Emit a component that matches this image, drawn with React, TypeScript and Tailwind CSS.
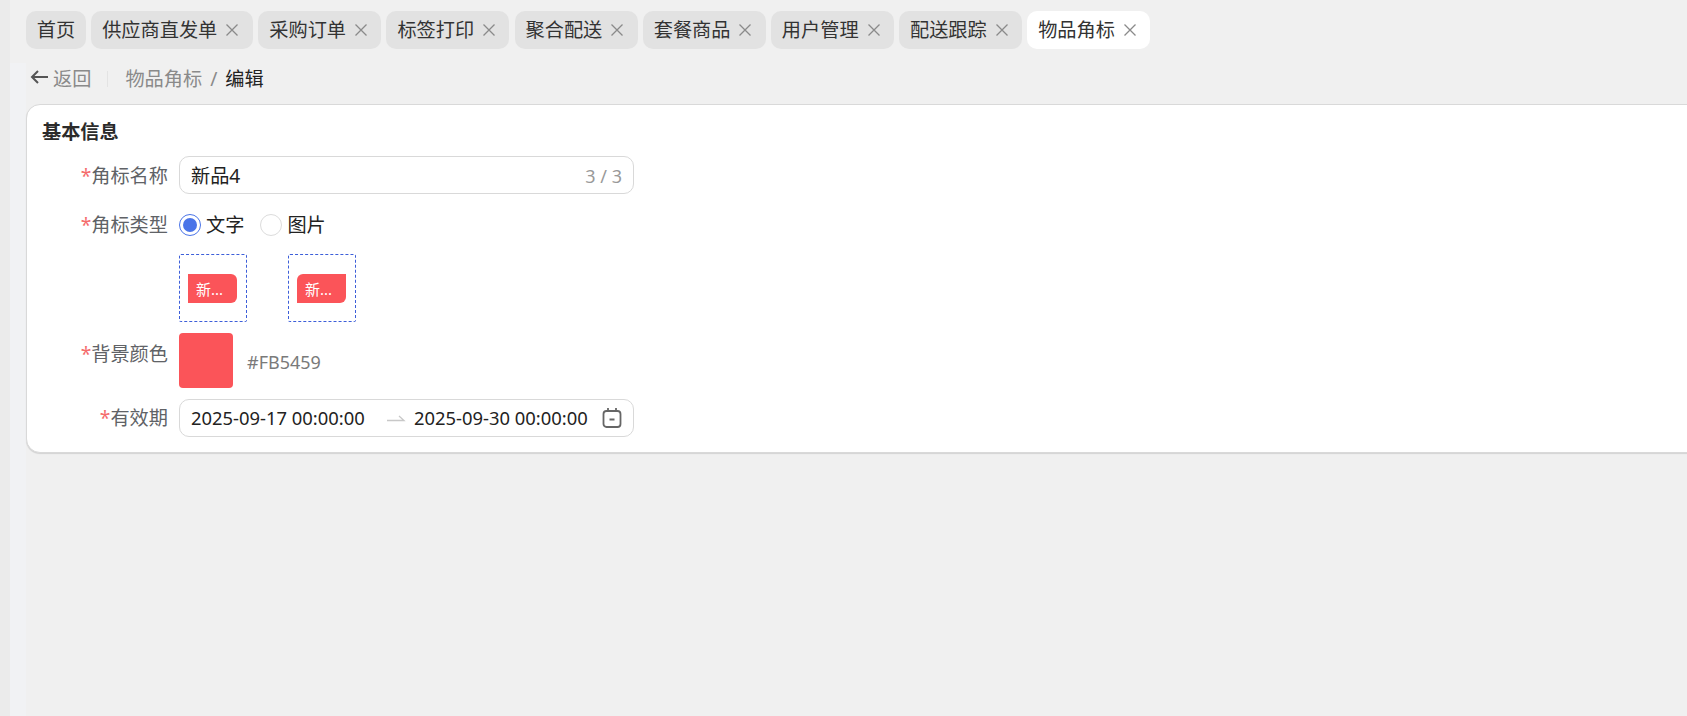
const FONT = "font-['Noto_Sans','Noto_Sans_CJK_SC',sans-serif]";

const TABS = [
  { label: '供应商直发单', width: 'w-[162px]' },
  { label: '采购订单', width: 'w-[123px]' },
  { label: '标签打印', width: 'w-[123px]' },
  { label: '聚合配送', width: 'w-[123px]' },
  { label: '套餐商品', width: 'w-[123px]' },
  { label: '用户管理', width: 'w-[123px]' },
  { label: '配送跟踪', width: 'w-[123px]' },
];

function CloseIcon() {
  return (
    <svg width="12" height="12" viewBox="0 0 12 12" className="shrink-0 text-[#8a8a8a]">
      <path d="M.5.5 11.5 11.5M11.5.5.5 11.5" stroke="currentColor" strokeWidth="1.3" fill="none" />
    </svg>
  );
}

function Tab({ label, width, active }: { label: string; width: string; active?: boolean }) {
  return (
    <div
      className={`${width} h-[38px] shrink-0 rounded-[10px] flex items-center pl-[11px] gap-[9px] text-[19.2px] text-[#333] ${
        active ? 'bg-white' : 'bg-[#e2e2e2]'
      }`}
    >
      <span className="whitespace-nowrap pt-[1px]">{label}</span>
      <CloseIcon />
    </div>
  );
}

function Label({ text, className = '' }: { text: string; className?: string }) {
  return (
    <div className={`w-[141px] shrink-0 text-right text-[19.2px] text-[#606266] leading-[26px] ${className}`}>
      <span className="text-[#f56c6c]">*</span>
      {text}
    </div>
  );
}

function Badge({ corners }: { corners: string }) {
  return (
    <div className="w-[68px] h-[68px] border border-dashed border-[#3d5fd9] rounded-[2px] flex items-center pl-[8px]">
      <div className={`w-[49px] h-[29px] mt-[2px] bg-[#fb5459] text-white text-[15px] flex items-center pl-[8px] pt-[1px] ${corners}`}>
        新...
      </div>
    </div>
  );
}

export default function App() {
  return (
    <div className={`${FONT} h-screen w-full overflow-hidden flex bg-[#f0f0f0]`}>
      <div className="w-[10px] shrink-0 bg-[#ebebeb]" />
      <div className="flex-1 min-w-0 flex flex-col">
        {/* tab bar */}
        <div className="h-[63px] shrink-0 flex gap-[5.15px] pt-[11px] pl-[16px]">
          <div className="w-[60px] h-[38px] rounded-[10px] bg-[#e2e2e2] flex items-center justify-center pt-[1px] text-[19.2px] text-[#333]">
            首页
          </div>
          {TABS.map((t) => (
            <Tab key={t.label} label={t.label} width={t.width} />
          ))}
          <Tab label="物品角标" width="w-[123px]" active />
        </div>

        <div className="flex-1 min-h-0 flex">
          <div className="w-[16px] shrink-0 bg-[#f1f2f4]" />
          <div className="flex-1 min-w-0">
            <div className="flex items-center h-[26px] mt-[3px] pl-[4px] text-[19.2px]">
              <svg width="19" height="16" viewBox="0 0 19 16" className="text-[#555] mr-[4px] -mt-[4px]">
                <path d="M18 8H2M8 2 2 8l6 6" stroke="currentColor" strokeWidth="2" fill="none" />
              </svg>
              <span className="text-[#8a8a8a]">返回</span>
              <div className="w-px h-[16px] bg-[#e3e3e3] ml-[16px] mr-[17px]" />
              <span className="text-[#8a8a8a]">物品角标</span>
              <span className="text-[#8a8a8a] mx-[8px]">/</span>
              <span className="text-[#222]">编辑</span>
            </div>

            <div className="w-[1700px] h-[349px] mt-[12px] bg-white border border-[#d9d9d9] rounded-[14px] shadow-[0_1px_1px_rgba(0,0,0,0.12)] pl-[15px] pt-[13px]">
              <div className="text-[19.2px] font-bold text-[#2b2b2b] leading-[26px] pt-[1px]">基本信息</div>

              <div className="flex items-center mt-[11px] -ml-[15px]">
                <Label text="角标名称" className="pt-[2px]" />
                <div className="w-[455px] h-[38px] ml-[11px] border border-[#d9d9d9] rounded-[10px] flex items-center justify-between px-[11px] pt-[2px] text-[19.2px] text-[#222]">
                  <span>新品4</span>
                  <span className="text-[18px] text-[#999]">3 / 3</span>
                </div>
              </div>

              <div className="flex items-center mt-[17px] -ml-[15px]">
                <Label text="角标类型" />
                <div className="flex items-center ml-[11px] text-[19.2px] text-[#222]">
                  <div className="w-[22px] h-[22px] rounded-full border border-[#4a74e8] flex items-center justify-center">
                    <div className="w-[14px] h-[14px] rounded-full bg-[#4a74e8]" />
                  </div>
                  <span className="ml-[5px]">文字</span>
                  <div className="w-[22px] h-[22px] rounded-full border border-[#dcdcdc] ml-[16px]" />
                  <span className="ml-[5px]">图片</span>
                </div>
              </div>

              <div className="flex gap-[41px] mt-[14px] ml-[137px]">
                <Badge corners="rounded-tr-[6px] rounded-br-[6px]" />
                <Badge corners="rounded-tl-[6px] rounded-br-[6px]" />
              </div>

              <div className="flex items-start mt-[11px] -ml-[15px]">
                <Label text="背景颜色" className="pt-[8px]" />
                <div className="w-[54px] h-[55px] ml-[11px] rounded-[4px] bg-[#fb5459]" />
                <span className="ml-[14px] mt-[16px] text-[18px] leading-[26px] text-[#7a7a7a]">#FB5459</span>
              </div>

              <div className="flex items-center mt-[11px] -ml-[15px]">
                <Label text="有效期" className="pt-[1px]" />
                <div className="w-[455px] h-[38px] ml-[11px] border border-[#d9d9d9] rounded-[10px] flex items-center pl-[11px] text-[18.4px] text-[#222]">
                  <span className="w-[173px] whitespace-nowrap pt-[1px]">2025-09-17 00:00:00</span>
                  <svg width="20" height="10" viewBox="0 0 20 10" className="ml-[22px] text-[#c8c8c8]">
                    <path d="M1 7.5H18L13 3" stroke="currentColor" strokeWidth="1.3" fill="none" />
                  </svg>
                  <span className="ml-[8px] w-[173px] whitespace-nowrap pt-[1px]">2025-09-30 00:00:00</span>
                  <svg width="20" height="22" viewBox="0 0 20 22" className="ml-[15px] text-[#666]">
                    <rect x="1.5" y="4" width="17" height="16" rx="3" stroke="currentColor" strokeWidth="1.8" fill="none" />
                    <path d="M6 1v4M14 1v4M7.5 12.5h5" stroke="currentColor" strokeWidth="1.8" fill="none" />
                  </svg>
                </div>
              </div>
            </div>
          </div>
        </div>
      </div>
    </div>
  );
}
